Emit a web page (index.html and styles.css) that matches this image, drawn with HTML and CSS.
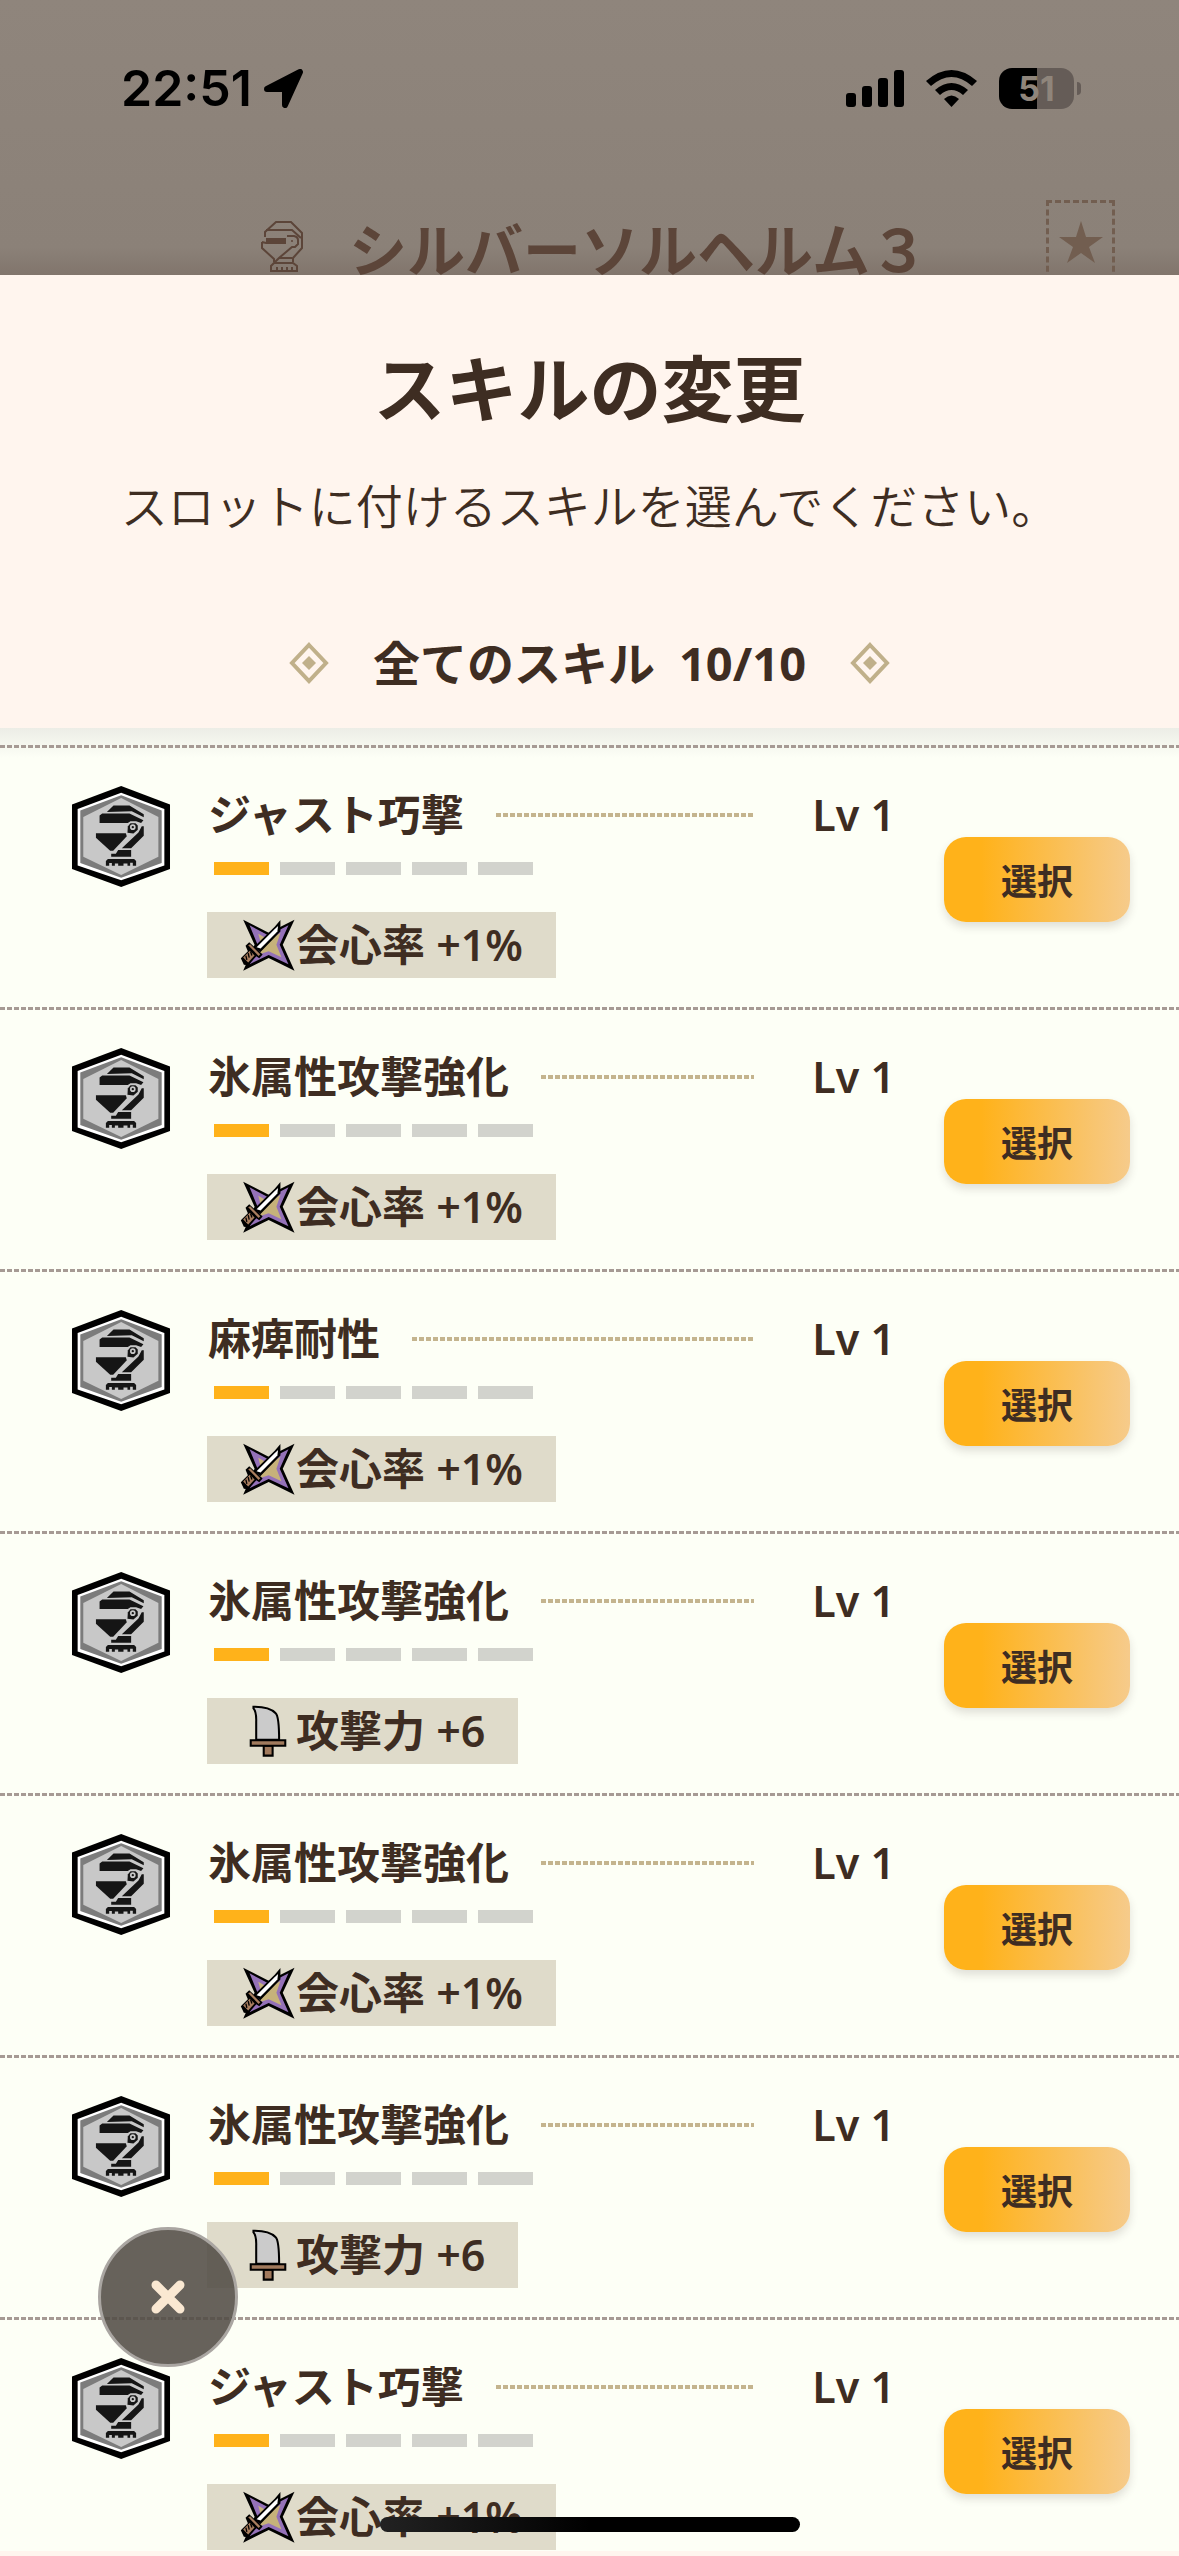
FILE: index.html
```html
<!DOCTYPE html>
<html lang="ja">
<head>
  <meta charset="UTF-8">
  <meta name="viewport" content="width=device-width, initial-scale=1.0">
  <title>スキルの変更</title>
  <link rel="stylesheet" href="styles.css">
</head>
<body>

  <!-- Shared icons -->
  <svg class="sprite" aria-hidden="true">
    <symbol id="icon-helm" viewBox="35 47 295 304">
      <polygon points="183,47 330,103 330,297 183,351 35,297 35,103" fill="#000"/>
      <polygon points="183,67 313,116 313,286 183,331 52,286 52,116" fill="#fff"/>
      <polygon points="183,75 305,121 305,279 183,323 60,279 60,121" fill="#7c7c7c"/>
      <polygon points="183,83 295,140 295,260 183,315 69,260 69,140" fill="#c8c8c8"/>
      <g fill="#151515">
        <path d="M140 125L160 106H208L251 132V141L215 123Z"/>
        <path d="M118 136L126 130H208L250 150L243 158L228 153H211L203 158H118Z"/>
        <path d="M203 169L211 159H226L233 166V179L220 190L202 188Z"/>
        <path d="M107 189H197L200 198L159 242H150L107 203Z"/>
        <path d="M245 168H251V197L213 234H185L235 187Z"/>
        <path d="M174 240H213V260H153V251H167Z"/>
        <path d="M137 273L143 267H222L228 273V287H218V278H210V287H202V280H190V287H174V280H164V287H155V279H147V287H137Z"/>
      </g>
      <circle cx="218" cy="171" r="6" fill="#151515" stroke="#c8c8c8" stroke-width="5"/>
    </symbol>

    <symbol id="icon-crit" viewBox="122 58 162 155">
      <path d="M129 60L205 99L282 60L247 135L282 212L205 174L129 212L163 135Z" fill="#000"/>
      <path d="M148 77L205 107L264 77L238 135L264 193L205 165L148 193L172 135Z" fill="#9471b8"/>
      <path d="M174 102L205 120L240 100L228 135L243 172L205 154L176 164L183 135Z" fill="#c6b27a"/>
      <path d="M161 142L223 81L240 61L240 95L180 157Z" fill="#000"/>
      <path d="M169 142L221 90L233 79L231 95L181 146Z" fill="#fff"/>
      <path d="M136 138L147 127L187 164L177 175L168 169L145 196L131 194L122 175L143 154Z" fill="#000"/>
      <path d="M144 136L150 133L180 163L175 168Z" fill="#a97e5f"/>
      <path d="M149 153L163 167L144 188L129 173Z" fill="#a97e5f"/>
      <path d="M144 160L147 173M137 167L140 180M151 155L155 167" stroke="#000" stroke-width="4" fill="none"/>
    </symbol>

    <symbol id="icon-attack" viewBox="149 46 109 152">
      <g stroke="#000" stroke-width="6">
        <path d="M161 51Q207 50 226 70Q236 80 236 148H169V95Q170 66 161 56Z" fill="#cbcbcb"/>
        <path d="M191 165H217V194H191Z" fill="#a17a5d"/>
        <path d="M153 149H254V165H153Z" fill="#a17a5d"/>
      </g>
    </symbol>

    <symbol id="icon-diamond" viewBox="0 0 40 42">
      <path d="M20 3L37 21L20 39L3 21Z" fill="none" stroke="#c0b08a" stroke-width="4"/>
      <path d="M20 14L27 21L20 28L13 21Z" fill="#c0b08a"/>
    </symbol>
  </svg>

  <div class="screen">
    <div class="backdrop">
      <div class="status-bar">
        <div class="status-left">
          <span class="clock">22:51</span>
          <svg class="location" viewBox="0 0 39 39" aria-hidden="true">
            <path d="M36 3L21 36V20H3L36 3Z" stroke="#000" stroke-width="6" stroke-linejoin="round"/>
          </svg>
        </div>
        <div class="status-right">
          <svg class="signal" viewBox="0 0 58 37" aria-hidden="true">
            <rect x="0" y="23" width="10" height="14" rx="3"/>
            <rect x="16" y="16" width="10" height="21" rx="3"/>
            <rect x="32" y="8" width="10" height="29" rx="3"/>
            <rect x="48" y="0" width="10" height="37" rx="3"/>
          </svg>
          <svg class="wifi" viewBox="0 0 51 37" aria-hidden="true">
            <path d="M0 11Q25.500 -11 51 11L46 16Q25.500 -2 5 16Z"/>
            <path d="M9 20Q25.500 6 42 20L37 25Q25.500 15 14 25Z"/>
            <path d="M18 29Q25.500 22 33 29L25.500 37Z"/>
          </svg>
          <div class="battery"><span>51</span></div>
        </div>
      </div>
      <div class="gear-title">
        <svg class="gear-icon" viewBox="0 0 42 51" aria-hidden="true">
          <path d="M4 16V11L15 1H30L41 12V27L32 37V41M5 9H31L40 17M1 21V27L13 38V41M1 21L5 22H25M26 15H33Q37 16 37 19V23L34 26H31L18 37L13 42M18 37H31M13 42H32L36 45V50H10V45L13 42M16 50V46M21 50V46M26 50V46M31 50V46" fill="none" stroke="#5c4539" stroke-width="2"/>
          <path d="M5 17H25V23H5Z" fill="#5c4539"/>
          <circle cx="31" cy="20" r="1" fill="#5c4539"/>
        </svg>
        <span class="gear-name">シルバーソルヘルム３</span>
      </div>
      <div class="bookmark">
        <svg viewBox="0 0 44 42" aria-hidden="true">
          <path d="M22 0L27 16H44L30 26L36 42L22 32L8 42L14 26L0 16H17Z" fill="#725e50"/>
        </svg>
      </div>
    </div>

    <main class="sheet">
      <header class="sheet-header">
        <h1>スキルの変更</h1>
        <p>スロットに付けるスキルを選んでください。</p>
        <h2>
          <svg class="diamond" aria-hidden="true"><use href="#icon-diamond"/></svg>
          <span class="count"><span>全てのスキル</span><span>10/10</span></span>
          <svg class="diamond" aria-hidden="true"><use href="#icon-diamond"/></svg>
        </h2>
      </header>

      <ul class="skill-list">
        <li class="skill">
          <svg class="skill-icon" aria-hidden="true"><use href="#icon-helm"/></svg>
          <div class="skill-body">
            <div class="skill-head"><h3>ジャスト巧撃</h3><span class="leader"></span><span class="level">Lv 1</span></div>
            <div class="meter"><i class="on"></i><i></i><i></i><i></i><i></i></div>
            <div class="bonus"><svg class="bonus-icon" aria-hidden="true"><use href="#icon-crit"/></svg><span>会心率 +1%</span></div>
          </div>
          <button type="button" class="select">選択</button>
        </li>
        <li class="skill">
          <svg class="skill-icon" aria-hidden="true"><use href="#icon-helm"/></svg>
          <div class="skill-body">
            <div class="skill-head"><h3>氷属性攻撃強化</h3><span class="leader"></span><span class="level">Lv 1</span></div>
            <div class="meter"><i class="on"></i><i></i><i></i><i></i><i></i></div>
            <div class="bonus"><svg class="bonus-icon" aria-hidden="true"><use href="#icon-crit"/></svg><span>会心率 +1%</span></div>
          </div>
          <button type="button" class="select">選択</button>
        </li>
        <li class="skill">
          <svg class="skill-icon" aria-hidden="true"><use href="#icon-helm"/></svg>
          <div class="skill-body">
            <div class="skill-head"><h3>麻痺耐性</h3><span class="leader"></span><span class="level">Lv 1</span></div>
            <div class="meter"><i class="on"></i><i></i><i></i><i></i><i></i></div>
            <div class="bonus"><svg class="bonus-icon" aria-hidden="true"><use href="#icon-crit"/></svg><span>会心率 +1%</span></div>
          </div>
          <button type="button" class="select">選択</button>
        </li>
        <li class="skill">
          <svg class="skill-icon" aria-hidden="true"><use href="#icon-helm"/></svg>
          <div class="skill-body">
            <div class="skill-head"><h3>氷属性攻撃強化</h3><span class="leader"></span><span class="level">Lv 1</span></div>
            <div class="meter"><i class="on"></i><i></i><i></i><i></i><i></i></div>
            <div class="bonus"><svg class="bonus-icon" aria-hidden="true"><use href="#icon-attack"/></svg><span>攻撃力 +6</span></div>
          </div>
          <button type="button" class="select">選択</button>
        </li>
        <li class="skill">
          <svg class="skill-icon" aria-hidden="true"><use href="#icon-helm"/></svg>
          <div class="skill-body">
            <div class="skill-head"><h3>氷属性攻撃強化</h3><span class="leader"></span><span class="level">Lv 1</span></div>
            <div class="meter"><i class="on"></i><i></i><i></i><i></i><i></i></div>
            <div class="bonus"><svg class="bonus-icon" aria-hidden="true"><use href="#icon-crit"/></svg><span>会心率 +1%</span></div>
          </div>
          <button type="button" class="select">選択</button>
        </li>
        <li class="skill">
          <svg class="skill-icon" aria-hidden="true"><use href="#icon-helm"/></svg>
          <div class="skill-body">
            <div class="skill-head"><h3>氷属性攻撃強化</h3><span class="leader"></span><span class="level">Lv 1</span></div>
            <div class="meter"><i class="on"></i><i></i><i></i><i></i><i></i></div>
            <div class="bonus"><svg class="bonus-icon" aria-hidden="true"><use href="#icon-attack"/></svg><span>攻撃力 +6</span></div>
          </div>
          <button type="button" class="select">選択</button>
        </li>
        <li class="skill">
          <svg class="skill-icon" aria-hidden="true"><use href="#icon-helm"/></svg>
          <div class="skill-body">
            <div class="skill-head"><h3>ジャスト巧撃</h3><span class="leader"></span><span class="level">Lv 1</span></div>
            <div class="meter"><i class="on"></i><i></i><i></i><i></i><i></i></div>
            <div class="bonus"><svg class="bonus-icon" aria-hidden="true"><use href="#icon-crit"/></svg><span>会心率 +1%</span></div>
          </div>
          <button type="button" class="select">選択</button>
        </li>
      </ul>
    </main>

    <button type="button" class="close" aria-label="閉じる">
      <svg viewBox="0 0 34 34" aria-hidden="true">
        <path d="M5 5L29 29M29 5L5 29" stroke="#fae8d2" stroke-width="9" stroke-linecap="round"/>
      </svg>
    </button>
    <div class="home-indicator"></div>
  </div>

</body>
</html>
```

FILE: styles.css
```css
* {
  box-sizing: border-box;
}

body {
  margin: 0;
  font-family: "Noto Sans", "Noto Sans CJK JP", sans-serif;
  color: #3e2d22;
  background-color: #fff5ee;
}

h1, h2, h3, p, ul {
  margin: 0;
  padding: 0;
}

.sprite {
  display: none;
}

.screen {
  position: relative;
  display: flex;
  flex-direction: column;
  height: 100vh;
  overflow: hidden;
}

/* Dimmed page behind the sheet */
.backdrop {
  position: relative;
  flex: none;
  height: 275px;
  overflow: hidden;
  background: linear-gradient(#8f857c, #8b8178 90%, #81756c);
}

.status-bar {
  display: flex;
  justify-content: space-between;
  align-items: center;
  height: 176px;
  padding: 0 105px 0 121px;
  color: #000;
}

.status-left, .status-right {
  display: flex;
  align-items: center;
}

.status-left {
  gap: 12px;
}

.status-right {
  gap: 22px;
}

.clock {
  font-family: Inter, sans-serif;
  font-size: 50px;
  font-weight: 600;
}

.location {
  width: 39px;
  height: 39px;
}

.signal {
  width: 58px;
  height: 37px;
}

.wifi {
  width: 51px;
  height: 37px;
}

.battery {
  position: relative;
  width: 75px;
  height: 41px;
  border-radius: 13px;
  background: linear-gradient(90deg, #000 51%, #655c57 51%);
  color: #8f857b;
  font: bold 34px/41px Inter, sans-serif;
  text-align: center;
}

.battery::after {
  content: "";
  position: absolute;
  right: -7px;
  top: 14px;
  width: 4px;
  height: 13px;
  border-radius: 0 4px 4px 0;
  background-color: #655c57;
}

.gear-title {
  display: flex;
  justify-content: center;
  gap: 46px;
  height: 99px;
  padding-left: 10px;
  color: #5c4539;
}

.gear-icon {
  width: 42px;
  height: 51px;
  margin-top: 45px;
}

.gear-name {
  font-size: 58px;
  font-weight: bold;
  line-height: 148px;
  white-space: nowrap;
}

.bookmark {
  position: absolute;
  top: 200px;
  right: 64px;
  width: 69px;
  height: 100px;
  padding: 18px 10px;
  border: 3px dashed #725e50;
}

.bookmark svg {
  display: block;
  width: 44px;
  height: 42px;
}

/* Sheet */
.sheet {
  display: flex;
  flex-direction: column;
  flex: 1;
  min-height: 0;
  padding-bottom: 5px;
}

.sheet-header {
  padding-top: 60px;
  height: 453px;
  flex: none;
  text-align: center;
}

h1 {
  font-size: 72px;
  line-height: 106px;
}

.sheet-header p {
  margin-top: 30px;
  font-size: 47px;
  font-weight: 350;
  line-height: 70px;
}

h2 {
  display: flex;
  justify-content: center;
  align-items: center;
  gap: 44px;
  margin-top: 87px;
  font-size: 47px;
  line-height: 70px;
}

.count {
  display: flex;
  gap: 24px;
}

.diamond {
  width: 40px;
  height: 42px;
}

.skill-list {
  flex: 1;
  min-height: 0;
  overflow: hidden;
  padding-top: 17px;
  list-style: none;
  background: linear-gradient(#ecede6, #fdfff6 30px);
}

.skill {
  display: flex;
  height: 262px;
  padding: 41px 49px 0 71px;
  background: repeating-linear-gradient(90deg, #a69a94 0 5px, transparent 5px 7px) top / 100% 3px no-repeat;
}

.skill-icon {
  flex: none;
  width: 100px;
  height: 101px;
}

.skill-body {
  flex: 1;
  margin: 0 49px 0 36px;
}

.skill-head {
  display: flex;
  align-items: center;
  height: 58px;
  padding-left: 1px;
}

h3 {
  font-size: 43px;
  font-weight: 600;
  line-height: 58px;
}

.leader {
  flex: 1;
  height: 4px;
  margin: 0 58px 0 32px;
  background: repeating-linear-gradient(90deg, #c4b48e 0 5px, transparent 5px 7px);
}

.level {
  font-size: 43px;
  font-weight: 600;
  line-height: 58px;
}

.meter {
  display: flex;
  gap: 11px;
  margin: 18px 7px 37px;
}

.meter i {
  width: 55px;
  height: 13px;
  background-color: #d2d3cd;
}

.meter .on {
  background-color: #ffb21a;
}

.bonus {
  display: inline-flex;
  align-items: center;
  height: 66px;
  padding: 0 33px;
  background-color: #dfdbca;
  font-size: 43px;
  font-weight: 600;
  line-height: 68px;
}

.bonus-icon {
  width: 56px;
  height: 52px;
}

.select {
  width: 186px;
  height: 85px;
  margin-top: 51px;
  border: none;
  border-radius: 22px;
  background: linear-gradient(90deg, #ffb21a 20%, #f6cb8b);
  box-shadow: 0 5px 8px rgba(60, 50, 50, 0.15);
  color: #3e2d22;
  font: 600 36px "Noto Sans", "Noto Sans CJK JP", sans-serif;
}

.close {
  position: absolute;
  left: 98px;
  bottom: 189px;
  display: flex;
  justify-content: center;
  align-items: center;
  width: 140px;
  height: 140px;
  border: 3px solid #aaa6a2;
  border-radius: 50%;
  background-color: rgba(82, 76, 70, 0.88);
}

.close svg {
  width: 34px;
  height: 34px;
}

.home-indicator {
  position: absolute;
  left: 50%;
  bottom: 24px;
  width: 420px;
  height: 15px;
  border-radius: 8px;
  background: linear-gradient(90deg, #222, #000 50%);
  transform: translateX(-50%);
}
```
